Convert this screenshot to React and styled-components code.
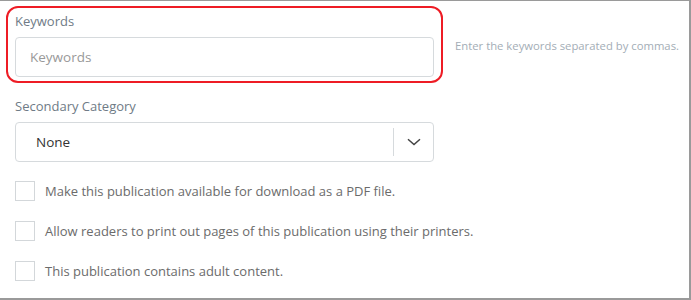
import React from "react";
import styled, { createGlobalStyle } from "styled-components";

const Global = createGlobalStyle`
  html, body { margin: 0; padding: 0; background: #fff; }
  body { font-family: "Open Sans", "Liberation Sans", sans-serif; }
  * { box-sizing: border-box; }
`;

const Panel = styled.div`
  width: 691px;
  height: 300px;
  border-top: 1px solid #9a9a9a;
  border-right: 2px solid #9a9a9a;
  border-bottom: 2px solid #9a9a9a;
  padding: 5px 0 0 6px;
  background: #fff;
`;

const KeywordRow = styled.div`
  display: flex;
  align-items: flex-start;
`;

const Highlight = styled.div`
  width: 437px;
  height: 77px;
  border: 2px solid #ee1c25;
  border-radius: 12px;
  padding: 4px 7px 0 7px;
`;

const Label = styled.div`
  font-size: 13px;
  line-height: 18px;
  color: #6f7b86;
  margin-bottom: ${(p) => p.$gap}px;
`;

const TextInput = styled.input`
  display: block;
  width: 100%;
  height: 40px;
  border: 1px solid #d6dadd;
  border-radius: 4px;
  padding: 0 14px;
  font-family: inherit;
  font-size: 13.5px;
  color: #333;
  outline: none;
  &::placeholder { color: #999; }
`;

const Help = styled.div`
  margin: 33px 0 0 12px;
  font-size: 11.3px;
  line-height: 14px;
  color: #a3adb6;
`;

const Section = styled.div`
  padding: 14px 0 0 9px;
  width: 428px;
`;

const Select = styled.div`
  display: flex;
  align-items: stretch;
  height: 40px;
  border: 1px solid #d6dadd;
  border-radius: 4px;
`;

const SelectValue = styled.div`
  flex: 1;
  display: flex;
  align-items: center;
  padding-left: 20px;
  font-size: 13.5px;
  color: #333;
`;

const SelectButton = styled.div`
  width: 40px;
  display: flex;
  align-items: center;
  justify-content: center;
  margin: 5px 0;
  border-left: 1px solid #d6dadd;
`;

const Options = styled.div`
  display: flex;
  flex-direction: column;
  gap: 20px;
  padding: 19px 0 0 9px;
`;

const Option = styled.label`
  display: flex;
  align-items: center;
  gap: 10px;
  font-size: 13px;
  color: #6b6b6b;
  height: 20px;
`;

const Box = styled.span`
  width: 20px;
  height: 20px;
  border: 1px solid #d3d7da;
  background: #fff;
  flex: none;
`;

export default function App() {
  return (
    <>
      <Global />
      <Panel>
        <KeywordRow>
          <Highlight>
            <Label $gap={7}>Keywords</Label>
            <TextInput placeholder="Keywords" />
          </Highlight>
          <Help>Enter the keywords separated by commas.</Help>
        </KeywordRow>
        <Section>
          <Label $gap={7}>Secondary Category</Label>
          <Select>
            <SelectValue>None</SelectValue>
            <SelectButton>
              <svg width="14" height="8" viewBox="0 0 14 8">
                <path d="M1 1.2 L7 6.6 L13 1.2" fill="none" stroke="#444" strokeWidth="1.5" />
              </svg>
            </SelectButton>
          </Select>
        </Section>
        <Options>
          <Option><Box />Make this publication available for download as a PDF file.</Option>
          <Option><Box />Allow readers to print out pages of this publication using their printers.</Option>
          <Option><Box />This publication contains adult content.</Option>
        </Options>
      </Panel>
    </>
  );
}
